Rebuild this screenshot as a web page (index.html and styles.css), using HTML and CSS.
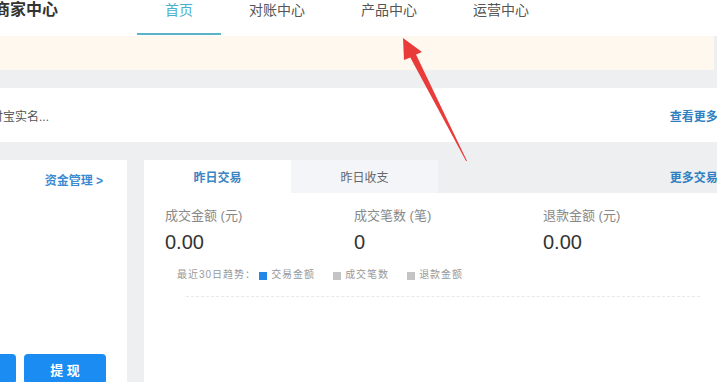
FILE: index.html
```html
<!DOCTYPE html>
<html lang="zh">
<head>
<meta charset="utf-8">
<title>商家中心</title>
<link rel="stylesheet" href="styles.css">
</head>
<body>
<div class="page">
  <header class="header">
    <div class="logo">商家中心</div>
    <nav class="nav">
      <a class="nav-item active">首页</a>
      <a class="nav-item">对账中心</a>
      <a class="nav-item">产品中心</a>
      <a class="nav-item">运营中心</a>
    </nav>
  </header>
  <div class="notice"></div>
  <section class="band">
    <span class="band-text">支付宝实名...</span>
    <a class="link">查看更多 &gt;</a>
  </section>
  <div class="main">
    <section class="card fund">
      <div class="fund-head"><a class="link">资金管理 &gt;</a></div>
      <div class="fund-body"></div>
      <div class="fund-btns">
        <button class="btn">充 值</button>
        <button class="btn">提 现</button>
      </div>
    </section>
    <section class="card trade">
      <div class="tabs">
        <div class="tab active">昨日交易</div>
        <div class="tab">昨日收支</div>
        <div class="tabs-rest"><a class="link">更多交易 &gt;</a></div>
      </div>
      <div class="stats">
        <div class="stat">
          <div class="stat-label">成交金额 (元)</div>
          <div class="stat-value">0.00</div>
        </div>
        <div class="stat">
          <div class="stat-label">成交笔数 (笔)</div>
          <div class="stat-value">0</div>
        </div>
        <div class="stat">
          <div class="stat-label">退款金额 (元)</div>
          <div class="stat-value">0.00</div>
        </div>
      </div>
      <div class="legend">
        <span class="legend-title">最近30日趋势：</span>
        <span class="legend-item"><i class="sq blue"></i>交易金额</span>
        <span class="legend-item"><i class="sq gray"></i>成交笔数</span>
        <span class="legend-item"><i class="sq gray"></i>退款金额</span>
      </div>
      <div class="chart"></div>
    </section>
  </div>
  <svg class="arrow" width="717" height="382" viewBox="0 0 717 382" aria-hidden="true">
    <polygon points="403,38 422,52 416,54.6 467,161 466,161 410.3,57.4 404,60" fill="#ea3b3b"/>
  </svg>
</div>
</body>
</html>
```
FILE: styles.css
```css
html, body {
  margin: 0;
  padding: 0;
  overflow: hidden;
  background: #eeeff0;
}
body {
  font-family: "Liberation Sans", "Noto Sans CJK SC", sans-serif;
  color: #333;
}
.page {
  position: relative;
  width: 760px;
  height: 382px;
  overflow: hidden;
}
.header {
  height: 36px;
  background: #fff;
  display: flex;
  align-items: flex-start;
}
.logo {
  margin-left: -6px;
  font-size: 16px;
  font-weight: bold;
  line-height: 20px;
  color: #333;
  width: 143px;
  flex-shrink: 0;
}
.nav {
  display: flex;
}
.nav-item {
  display: block;
  box-sizing: border-box;
  height: 35px;
  padding: 0 28px;
  font-size: 14px;
  line-height: 20px;
  color: #555;
  border-bottom: 2px solid transparent;
}
.nav-item.active {
  color: #4aafc9;
  border-bottom-color: #5ab4c8;
}
.notice {
  height: 34px;
  width: 714px;
  background: #fef8ee;
}
.band {
  margin-top: 18px;
  height: 54px;
  background: #fff;
  display: flex;
  align-items: center;
  justify-content: space-between;
  padding-right: 32px;
}
.band-text {
  margin-left: -21px;
  font-size: 12px;
  color: #555;
}
.link {
  font-size: 12px;
  font-weight: bold;
  color: #2f7fc1;
  white-space: nowrap;
}
.main {
  margin-top: 18px;
  display: flex;
  gap: 17px;
  height: 240px;
}
.card {
  background: #fff;
}
.fund {
  width: 127px;
  flex-shrink: 0;
  display: flex;
  flex-direction: column;
}
.fund-head {
  height: 38px;
  display: flex;
  align-items: center;
  justify-content: flex-end;
  padding-right: 24px;
}
.fund-head .link {
  color: #3a8ad2;
}
.fund-body {
  height: 156px;
}
.fund-btns {
  display: flex;
  justify-content: flex-end;
  gap: 8px;
  padding-right: 21px;
}
.btn {
  flex-shrink: 0;
  width: 82px;
  height: 30px;
  border: 0;
  border-radius: 4px;
  background: #1a8cf2;
  color: #fff;
  font-family: inherit;
  font-size: 13px;
  font-weight: bold;
  padding: 0;
}
.trade {
  flex: 1;
}
.tabs {
  display: flex;
  height: 33px;
}
.tab {
  width: 147px;
  display: flex;
  align-items: center;
  justify-content: center;
  font-size: 12px;
  color: #666;
  background: #f3f5f9;
}
.tab.active {
  background: #fff;
  color: #3b85c4;
  font-weight: bold;
}
.tabs-rest {
  flex: 1;
  background: #eeeff0;
  display: flex;
  align-items: center;
  justify-content: flex-end;
  padding-right: 32px;
}
.stats {
  display: flex;
  padding: 15px 0 0 21px;
}
.stat {
  width: 189px;
}
.stat-label {
  font-size: 13px;
  line-height: 16px;
  color: #888;
}
.stat-value {
  margin-top: 6px;
  font-size: 20px;
  line-height: 24px;
  color: #333;
}
.legend {
  display: flex;
  align-items: center;
  padding: 14px 0 0 33px;
  font-size: 10px;
  line-height: 14px;
  letter-spacing: 1px;
  color: #999;
}
.legend-title {
  margin-right: 3px;
}
.legend-item {
  display: flex;
  align-items: center;
  margin-right: 18px;
}
.sq {
  display: inline-block;
  width: 8px;
  height: 8px;
  margin-right: 4px;
  margin-top: 2px;
}
.sq.blue { background: #2288e8; }
.sq.gray { background: #c4c4c4; }
.chart {
  margin: 14px 60px 0 42px;
  border-top: 1px dashed #e8e8e8;
}
.arrow {
  position: absolute;
  left: 0;
  top: 0;
  pointer-events: none;
}
```
